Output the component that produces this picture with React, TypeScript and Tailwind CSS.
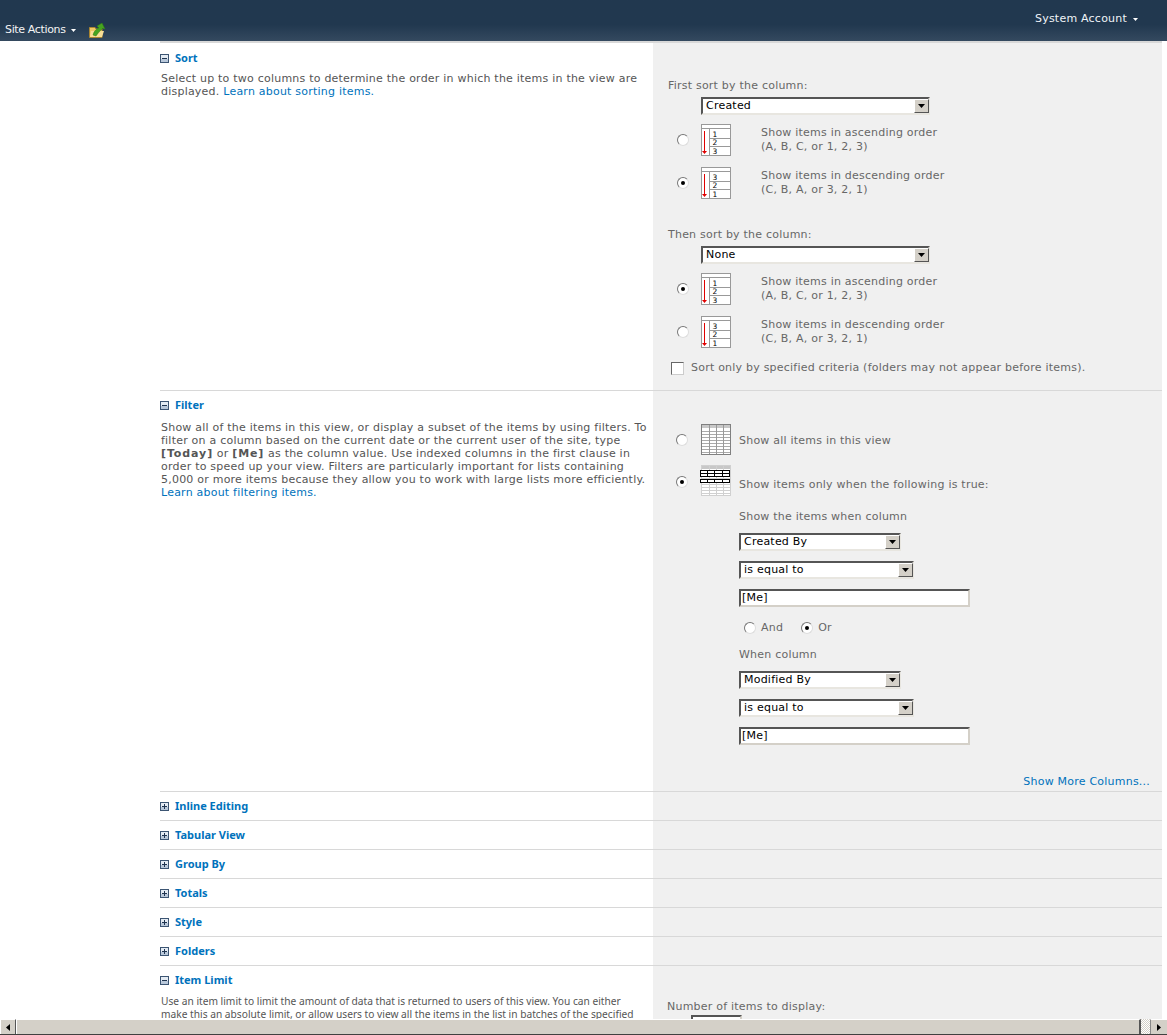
import type { ReactNode } from "react";

const fontBase = "font-['DejaVu_Sans',Verdana,sans-serif]";

function Toggle({ open }: { open: boolean }) {
  return (
    <svg width="9" height="9" viewBox="0 0 9 9" className="shrink-0">
      <rect x="0.5" y="0.5" width="8" height="8" fill="#e4ebf3" stroke="#3c5573" />
      <rect x="1" y="5" width="7" height="3" fill="#b9c8da" />
      <path d="M2 4.5H7" stroke="#1f3450" />
      {!open && <path d="M4.5 2V7" stroke="#1f3450" />}
    </svg>
  );
}

function Heading({ title, open }: { title: string; open: boolean }) {
  return (
    <div className="flex items-center gap-[6px] h-[14px] ml-[-1px]">
      <Toggle open={open} />
      <span className="font-['Noto_Sans',sans-serif] text-[11px] font-bold text-[#0072bc] tracking-normal">{title}</span>
    </div>
  );
}

function Radio({ checked }: { checked?: boolean }) {
  return (
    <span className="relative block w-[12px] h-[12px] rounded-full bg-white border border-t-[#777] border-l-[#777] border-r-[#ddd] border-b-[#ddd] shrink-0">
      {checked && <span className="absolute left-[3px] top-[3px] w-[4px] h-[4px] rounded-full bg-black" />}
    </span>
  );
}

function Select({ value, width }: { value: string; width: string }) {
  return (
    <div className={`${width} h-[18px] bg-white border-2 border-t-[#555] border-l-[#555] border-r-[#e8e6e0] border-b-[#e8e6e0] flex items-center justify-between pl-[3px] text-[11px] text-black`}>
      <span>{value}</span>
      <span className="w-[15px] h-[14px] mr-[-1px] bg-[#d4d0c8] border border-t-white border-l-white border-r-[#555] border-b-[#555] flex items-center justify-center">
        <svg width="7" height="4" viewBox="0 0 7 4">
          <path d="M0 0H7L3.5 4Z" fill="#000" />
        </svg>
      </span>
    </div>
  );
}

function TextBox({ value }: { value: string }) {
  return (
    <div className="w-[231px] h-[18px] bg-white border-2 border-t-[#555] border-l-[#555] border-r-[#d4d0c8] border-b-[#d4d0c8] flex items-center pl-[1px] text-[11px] text-black">
      {value}
    </div>
  );
}

function SortIcon({ order }: { order: string[] }) {
  const digit = "'DejaVu Sans'";
  return (
    <svg width="31" height="33" viewBox="0 0 31 33" className="shrink-0">
      <rect x="0.5" y="0.5" width="29" height="31" fill="#fff" stroke="#999" />
      <path d="M0 4.5H30M8.5 5V32M8.5 14.5H30M8.5 22.5H30" stroke="#999" />
      <path d="M3.5 7V27" stroke="#e00000" />
      <path d="M1 27H6L3.5 30Z" fill="#e00000" />
      <text x="14" y="12.5" fontSize="7.5" textAnchor="middle" fill="#000" fontFamily={digit}>{order[0]}</text>
      <text x="14" y="21" fontSize="7.5" textAnchor="middle" fill="#000" fontFamily={digit}>{order[1]}</text>
      <text x="14" y="30" fontSize="7.5" textAnchor="middle" fill="#000" fontFamily={digit}>{order[2]}</text>
    </svg>
  );
}

function GridIcon({ filtered }: { filtered?: boolean }) {
  const line = filtered ? "#d0d0d0" : "#aaa";
  const rows = [7, 10, 13, 16, 19, 22, 25, 28];
  return (
    <svg width="30" height="32" viewBox="0 0 30 32" className="shrink-0 overflow-visible">
      <rect x="0.5" y="0.5" width="29" height="30" fill="#fff" stroke={filtered ? "#d0d0d0" : "#808080"} />
      <rect x="1" y="1" width="28" height="3" fill="#c8c8c8" />
      {rows.map((y) => (
        <path key={y} d={`M1 ${y + 0.5}H29`} stroke={line} />
      ))}
      <path d="M8.5 1V30M15.5 1V30M22.5 1V30" stroke={filtered ? "#d0d0d0" : "#999"} />
      {filtered && (
        <g fill="none" stroke="#000">
          <rect x="-0.5" y="5.5" width="29" height="6" fill="#fff" />
          <path d="M-1 8.5H29M6.5 5V12M13.5 5V12M21.5 5V12" />
          <rect x="-0.5" y="14.5" width="29" height="3" fill="#fff" />
          <path d="M6.5 14V18M13.5 14V18M21.5 14V18" />
        </g>
      )}
    </svg>
  );
}

function SortChoice({ checked, order, lines }: { checked?: boolean; order: string[]; lines: string[] }) {
  return (
    <div className="flex items-center h-[33px] pl-[9px]">
      <span className="mt-[-2px]"><Radio checked={checked} /></span>
      <span className="ml-[12px]"><SortIcon order={order} /></span>
      <div className="ml-[29px] leading-[14px] mt-[-1px]">
        <div>{lines[0]}</div>
        <div>{lines[1]}</div>
      </div>
    </div>
  );
}

const ascending = ["Show items in ascending order", "(A, B, C, or 1, 2, 3)"];
const descending = ["Show items in descending order", "(C, B, A, or 3, 2, 1)"];

function Row({ left, right, height }: { left: ReactNode; right?: ReactNode; height: string }) {
  return (
    <div className={`${height} w-[1002px] grid grid-cols-[493px_509px] border-b border-[#d8d8d8]`}>
      <div className="pl-px pt-[7px] overflow-hidden">{left}</div>
      <div className="bg-[#f0f0f0] overflow-hidden">{right}</div>
    </div>
  );
}

function CollapsedRow({ title }: { title: string }) {
  return <Row height="h-[29px]" left={<Heading title={title} open={false} />} />;
}

export default function App() {
  return (
    <div className={`w-screen h-screen overflow-hidden flex flex-col bg-white ${fontBase} text-[11px] tracking-[0.22px] text-[#676767]`}>
      <header className="h-[41px] shrink-0 bg-gradient-to-b from-[#21384f] via-[#21384f] via-60% to-[#34495f] flex items-end justify-between text-white">
        <div className="flex items-center h-[22px] pl-[5px]">
          <span className="text-[#f4f4f4] text-[11px] tracking-[-0.35px]">Site Actions</span>
          <svg width="5" height="3" viewBox="0 0 5 3" className="ml-[5px] mt-[1px]">
            <path d="M0 0H5L2.5 3Z" fill="#fff" />
          </svg>
          <svg width="17" height="15" viewBox="0 0 17 15" className="ml-[13px]">
            <path d="M0.5 4.5H6L7 6H13V14.5H0.5Z" fill="#f0c766" stroke="#a98530" />
            <path d="M2 8H15L13 14H1Z" fill="#f8de96" />
            <path d="M4 12C5 8 7 6 10 5L8 3L13 0L16 6L13.5 5.5C11 8 9 10 7 13Z" fill="#46a420" stroke="#2e7d12" strokeWidth="0.5" />
          </svg>
        </div>
        <div className="flex items-center h-[39px] pr-[29px] self-start">
          <span className="text-[#f0f4f8] text-[11px]">System Account</span>
          <svg width="5" height="3" viewBox="0 0 5 3" className="ml-[6px]">
            <path d="M0 0H5L2.5 3Z" fill="#fff" />
          </svg>
        </div>
      </header>

      <main className="flex-1 min-h-0 overflow-hidden pl-[160px]">
        <div className="h-[2px] w-[1002px] bg-[#d8d8d8]" />
        <Row
          height="h-[348px]"
          left={
            <div className="pt-px">
              <Heading title="Sort" open />
              <p className="mt-[7px] leading-[13px] text-[#555]">
                Select up to two columns to determine the order in which the items in the view are displayed.{" "}
                <span className="text-[#0072bc]">Learn about sorting items.</span>
              </p>
            </div>
          }
          right={
            <div className="pl-[15px] pt-[36px]">
              <div className="leading-[14px]">First sort by the column:</div>
              <div className="ml-[33px] mt-[4px]"><Select value="Created" width="w-[229px]" /></div>
              <div className="mt-[9px]"><SortChoice order={["1", "2", "3"]} lines={ascending} /></div>
              <div className="mt-[10px]"><SortChoice checked order={["3", "2", "1"]} lines={descending} /></div>
              <div className="leading-[14px] mt-[28px]">Then sort by the column:</div>
              <div className="ml-[33px] mt-[4px]"><Select value="None" width="w-[229px]" /></div>
              <div className="mt-[9px]"><SortChoice checked order={["1", "2", "3"]} lines={ascending} /></div>
              <div className="mt-[10px]"><SortChoice order={["3", "2", "1"]} lines={descending} /></div>
              <div className="flex items-center mt-[12px] pl-[3px]">
                <span className="w-[13px] h-[13px] bg-white border border-t-[#666] border-l-[#666] border-r-[#ccc] border-b-[#ccc]" />
                <span className="ml-[7px] leading-[14px]">Sort only by specified criteria (folders may not appear before items).</span>
              </div>
            </div>
          }
        />
        <Row
          height="h-[401px]"
          left={
            <>
              <Heading title="Filter" open />
              <p className="mt-[9px] leading-[13px] text-[#555]">
                Show all of the items in this view, or display a subset of the items by using filters. To filter on a column based on the current date or the current user of the site, type{" "}
                <b className="tracking-[0.9px]">[Today]</b> or <b className="tracking-[0.9px]">[Me]</b> as the column value. Use indexed columns in the first clause in order to speed up your view. Filters are particularly important for lists containing 5,000 or more items because they allow you to work with large lists more efficiently.{" "}
                <span className="text-[#0072bc]">Learn about filtering items.</span>
              </p>
            </>
          }
          right={
            <div className="pt-[33px] pl-[23px] relative h-full">
              <div className="flex items-center h-[32px]">
                <Radio />
                <span className="ml-[13px]"><GridIcon /></span>
                <span className="ml-[8px] mt-[2px]">Show all items in this view</span>
              </div>
              <div className="flex items-center h-[32px] mt-[9px]">
                <span className="mt-[2px]"><Radio checked /></span>
                <span className="ml-[13px]"><GridIcon filtered /></span>
                <span className="ml-[8px] mt-[9px]">Show items only when the following is true:</span>
              </div>
              <div className="ml-[63px] mt-[13px] flex flex-col items-start">
                <div className="leading-[14px]">Show the items when column</div>
                <div className="mt-[9px]"><Select value="Created By" width="w-[162px]" /></div>
                <div className="mt-[10px]"><Select value="is equal to" width="w-[175px]" /></div>
                <div className="mt-[10px]"><TextBox value="[Me]" /></div>
                <div className="flex items-center mt-[14px] pl-[5px] leading-[14px]">
                  <Radio />
                  <span className="ml-[5px]">And</span>
                  <span className="ml-[18px]"><Radio checked /></span>
                  <span className="ml-[5px]">Or</span>
                </div>
                <div className="leading-[14px] mt-[13px]">When column</div>
                <div className="mt-[9px]"><Select value="Modified By" width="w-[162px]" /></div>
                <div className="mt-[10px]"><Select value="is equal to" width="w-[175px]" /></div>
                <div className="mt-[10px]"><TextBox value="[Me]" /></div>
              </div>
              <div className="absolute right-[12px] top-[384px] text-[#0072bc] leading-[14px]">Show More Columns...</div>
            </div>
          }
        />
        <CollapsedRow title="Inline Editing" />
        <CollapsedRow title="Tabular View" />
        <CollapsedRow title="Group By" />
        <CollapsedRow title="Totals" />
        <CollapsedRow title="Style" />
        <CollapsedRow title="Folders" />
        <div className="grid w-[1002px] grid-cols-[493px_509px] h-[60px]">
          <div className="pl-px pt-[7px] overflow-hidden">
            <Heading title="Item Limit" open />
            <p className="mt-[8px] leading-[13px] font-['Noto_Sans',sans-serif] text-[10.2px] tracking-normal text-[#555]">
              Use an item limit to limit the amount of data that is returned to users of this view. You can either
              <br />
              make this an absolute limit, or allow users to view all the items in the list in batches of the specified
            </p>
          </div>
          <div className="bg-[#f0f0f0] pl-[14px] pt-[34px] overflow-hidden">
            <div className="leading-[14px]">Number of items to display:</div>
            <div className="ml-[24px] mt-[1px] w-[51px] h-[18px] bg-white border-2 border-t-[#555] border-l-[#555] border-r-[#d4d0c8] border-b-[#d4d0c8]" />
          </div>
        </div>
      </main>

      <div className="h-[16px] shrink-0 flex bg-[#d4d0c8] border-b border-[#404040]">
        <div className="w-[16px] border-t border-l border-t-white border-l-white border-r border-r-[#555] flex items-center justify-center">
          <svg width="4" height="7" viewBox="0 0 4 7"><path d="M4 0V7L0 3.5Z" fill="#000" /></svg>
        </div>
        <div className="flex-1 border-t border-l border-t-white border-l-white border-r-2 border-r-[#555]" />
        <div className="w-[9px] bg-[repeating-conic-gradient(#ffffff_0%_25%,#d4d0c8_0%_50%)] bg-[length:2px_2px]" />
        <div className="w-[17px] border-t border-l border-t-white border-l-[#888] flex items-center justify-center">
          <svg width="4" height="7" viewBox="0 0 4 7"><path d="M0 0V7L4 3.5Z" fill="#000" /></svg>
        </div>
      </div>
    </div>
  );
}
